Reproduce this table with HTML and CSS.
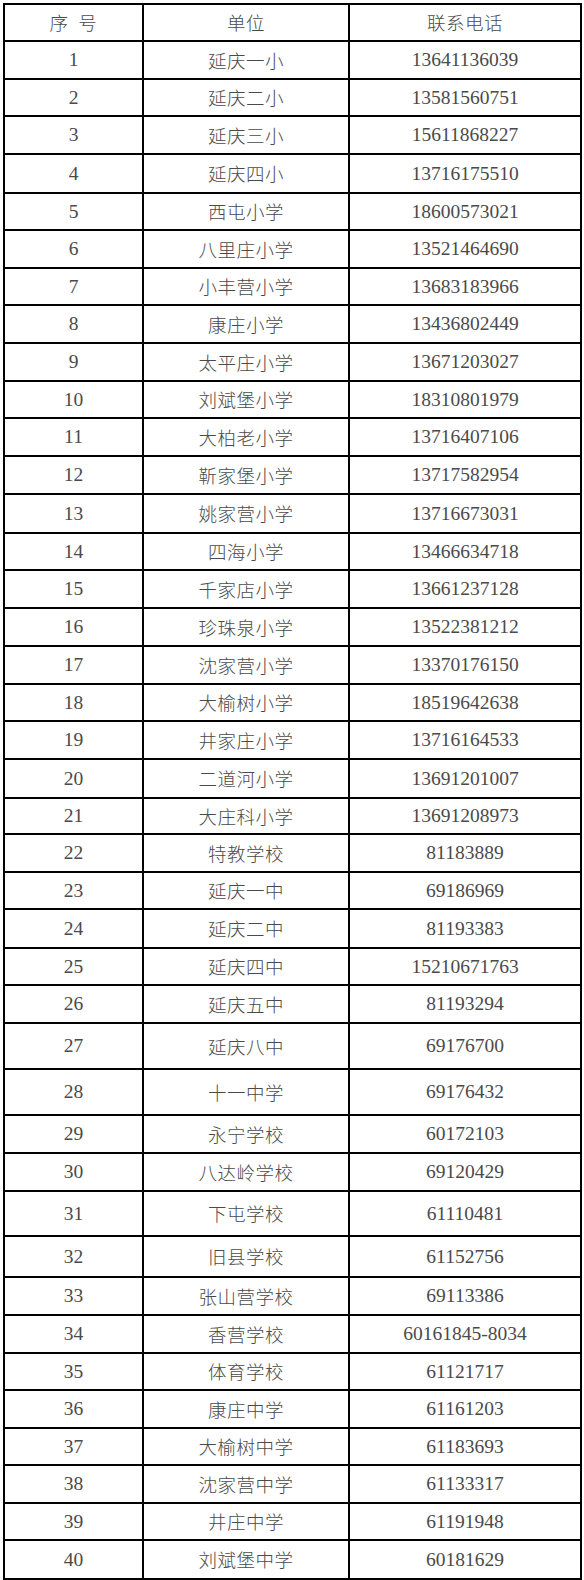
FILE: index.html
```html
<!DOCTYPE html>
<html lang="zh-CN">
<head>
<meta charset="utf-8">
<title>联系电话</title>
<link rel="stylesheet" href="styles.css">
</head>
<body>
<table class="contacts">
  <colgroup>
    <col class="c-no">
    <col class="c-unit">
    <col class="c-tel">
  </colgroup>
  <thead>
    <tr class="r37"><th>序&ensp;号</th><th>单位</th><th>联系电话</th></tr>
  </thead>
  <tbody>
    <tr class="r38"><td>1</td><td>延庆一小</td><td>13641136039</td></tr>
    <tr class="r37"><td>2</td><td>延庆二小</td><td>13581560751</td></tr>
    <tr class="r38"><td>3</td><td>延庆三小</td><td>15611868227</td></tr>
    <tr class="r39"><td>4</td><td>延庆四小</td><td>13716175510</td></tr>
    <tr class="r37"><td>5</td><td>西屯小学</td><td>18600573021</td></tr>
    <tr class="r38"><td>6</td><td>八里庄小学</td><td>13521464690</td></tr>
    <tr class="r37"><td>7</td><td>小丰营小学</td><td>13683183966</td></tr>
    <tr class="r38"><td>8</td><td>康庄小学</td><td>13436802449</td></tr>
    <tr class="r38"><td>9</td><td>太平庄小学</td><td>13671203027</td></tr>
    <tr class="r37"><td>10</td><td>刘斌堡小学</td><td>18310801979</td></tr>
    <tr class="r38"><td>11</td><td>大柏老小学</td><td>13716407106</td></tr>
    <tr class="r38"><td>12</td><td>靳家堡小学</td><td>13717582954</td></tr>
    <tr class="r39"><td>13</td><td>姚家营小学</td><td>13716673031</td></tr>
    <tr class="r37"><td>14</td><td>四海小学</td><td>13466634718</td></tr>
    <tr class="r38"><td>15</td><td>千家店小学</td><td>13661237128</td></tr>
    <tr class="r38"><td>16</td><td>珍珠泉小学</td><td>13522381212</td></tr>
    <tr class="r38"><td>17</td><td>沈家营小学</td><td>13370176150</td></tr>
    <tr class="r37"><td>18</td><td>大榆树小学</td><td>18519642638</td></tr>
    <tr class="r38"><td>19</td><td>井家庄小学</td><td>13716164533</td></tr>
    <tr class="r39"><td>20</td><td>二道河小学</td><td>13691201007</td></tr>
    <tr class="r36"><td>21</td><td>大庄科小学</td><td>13691208973</td></tr>
    <tr class="r38"><td>22</td><td>特教学校</td><td>81183889</td></tr>
    <tr class="r37"><td>23</td><td>延庆一中</td><td>69186969</td></tr>
    <tr class="r39"><td>24</td><td>延庆二中</td><td>81193383</td></tr>
    <tr class="r37"><td>25</td><td>延庆四中</td><td>15210671763</td></tr>
    <tr class="r38"><td>26</td><td>延庆五中</td><td>81193294</td></tr>
    <tr class="r46"><td>27</td><td>延庆八中</td><td>69176700</td></tr>
    <tr class="r46"><td>28</td><td>十一中学</td><td>69176432</td></tr>
    <tr class="r38"><td>29</td><td>永宁学校</td><td>60172103</td></tr>
    <tr class="r38"><td>30</td><td>八达岭学校</td><td>69120429</td></tr>
    <tr class="r45"><td>31</td><td>下屯学校</td><td>61110481</td></tr>
    <tr class="r41"><td>32</td><td>旧县学校</td><td>61152756</td></tr>
    <tr class="r38"><td>33</td><td>张山营学校</td><td>69113386</td></tr>
    <tr class="r38"><td>34</td><td>香营学校</td><td>60161845-8034</td></tr>
    <tr class="r37"><td>35</td><td>体育学校</td><td>61121717</td></tr>
    <tr class="r38"><td>36</td><td>康庄中学</td><td>61161203</td></tr>
    <tr class="r37"><td>37</td><td>大榆树中学</td><td>61183693</td></tr>
    <tr class="r38"><td>38</td><td>沈家营中学</td><td>61133317</td></tr>
    <tr class="r37"><td>39</td><td>井庄中学</td><td>61191948</td></tr>
    <tr class="r39"><td>40</td><td>刘斌堡中学</td><td>60181629</td></tr>
  </tbody>
</table>
</body>
</html>
```

FILE: styles.css
```css
html, body {
  margin: 0;
  padding: 0;
  background: #ffffff;
}

body {
  padding: 3px 0 0 3px;
}

.contacts {
  border-collapse: collapse;
  table-layout: fixed;
  width: 579px;
  font-family: "Liberation Serif", "Noto Sans CJK SC", serif;
  font-size: 19px;
  color: #4a4a4a;
  border: 2px solid #000;
}

.c-no { width: 139px; }
.c-unit { width: 206px; }
.c-tel { width: 232px; }

.contacts th,
.contacts td {
  border: 2px solid #000;
  padding: 0;
  text-align: center;
  vertical-align: middle;
  font-weight: 400;
  line-height: 1;
  white-space: nowrap;
}

.contacts td:nth-child(2),
.contacts th {
  font-family: "Noto Sans CJK SC", sans-serif;
  font-size: 18.5px;
  font-weight: 300;
  letter-spacing: 0.5px;
}

.contacts td:nth-child(3),
.contacts td:first-child {
  font-size: 19.5px;
}

.r36 { height: 36px; }
.r37 { height: 37px; }
.r38 { height: 38px; }
.r39 { height: 39px; }
.r41 { height: 41px; }
.r45 { height: 45px; }
.r46 { height: 46px; }
```
